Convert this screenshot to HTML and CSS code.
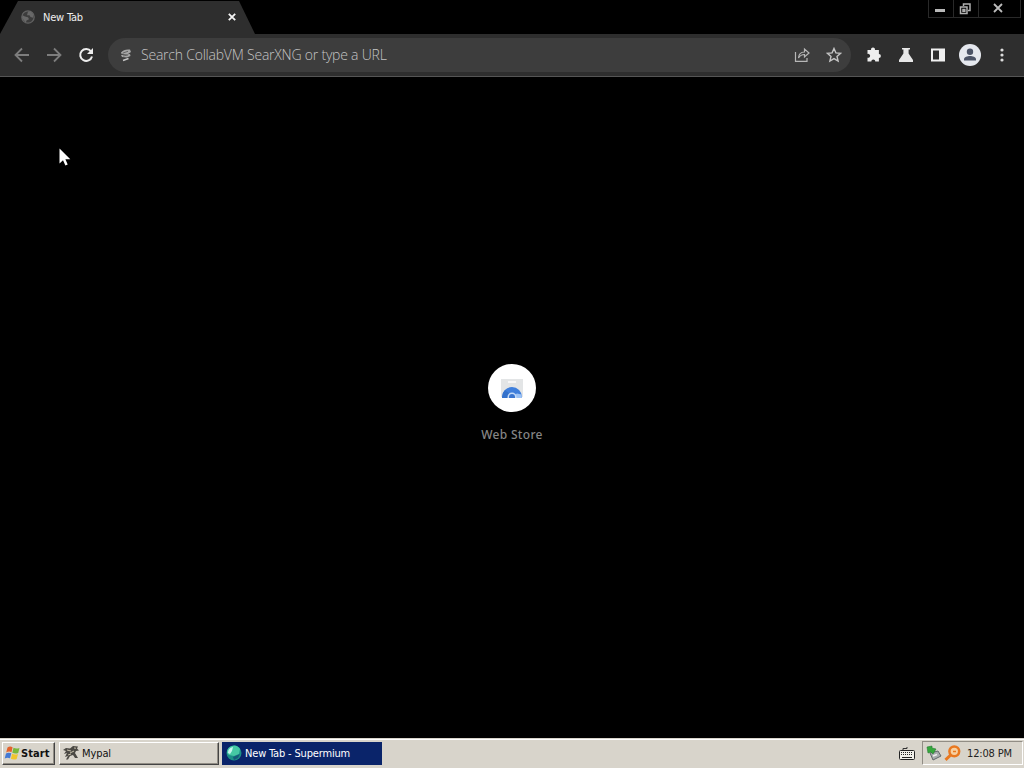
FILE: index.html
```
<!DOCTYPE html>
<html lang="en">
<head>
  <meta charset="utf-8">
  <title>New Tab</title>
  <link rel="stylesheet" href="styles.css">
</head>
<body>
  <!-- Tabs and window buttons -->
  <header class="tab-strip">
    <div class="tab">
      <svg class="globe" width="14" height="14" viewBox="0 0 14 14">
        <circle cx="7" cy="7" r="6.2" fill="#3c3c3c" stroke="#626262" stroke-width="1.3"/>
        <path d="M1.5 5.2L4 6.6l3 .6 1 2-2.5 1.3-.6 2.2L1 8zM7 1.5h3l2.4 3-.3 3.2-2.6-.7-1-1.8H6z" fill="#686868"/>
      </svg>
      <span class="tab-title">New Tab</span>
      <svg class="tab-close" width="8" height="8" viewBox="0 0 8 8"><path d="M.8.8l6.4 6.4M7.2.8L.8 7.2" stroke="#f4f4f4" stroke-width="1.8"/></svg>
    </div>
    <div class="window-buttons">
      <button><svg width="12" height="12"><path d="M1 7.5h10" stroke="#b8b8b8" stroke-width="3"/></svg></button>
      <button><svg width="12" height="12"><path d="M4.500 3V1H11v6.500H9M1.500 4H8v6.500H1.500zM4 6.500h1.800v1.800H4z" fill="none" stroke="#b0b0b0" stroke-width="1.5"/></svg></button>
      <button class="wide"><svg width="10" height="10"><path d="M1 1l8 8M9 1L1 9" stroke="#bcbcbc" stroke-width="1.800"/></svg></button>
    </div>
  </header>

  <!-- Toolbar -->
  <nav class="toolbar">
    <svg class="back" width="16" height="16" viewBox="0 0 16 16"><path d="M15 8H2M8 1.5L1.5 8 8 14.5" fill="none" stroke="#7d7d7d" stroke-width="1.8"/></svg>
    <svg class="forward" width="16" height="16" viewBox="0 0 16 16"><path d="M1 8h13M8 1.5L14.5 8 8 14.5" fill="none" stroke="#7d7d7d" stroke-width="1.8"/></svg>
    <svg class="reload" width="16" height="16" viewBox="0 0 16 16"><path d="M13 4.3A6 6 0 1 0 14 9.5" fill="none" stroke="#ededed" stroke-width="2"/><path d="M15 1v6H9z" fill="#ededed"/></svg>
    <div class="omnibox">
      <svg class="engine" width="12" height="14" viewBox="0 0 12 14">
        <path d="M1 4.500C3 2 6 1 10 1.500L11 4 8 6H4l-3-.5zM1 7l9-1 .500 2L7 9.500 2 9z" fill="#a5a5a5"/>
        <path d="M3 5l5-1.700M3 8l5-1" stroke="#555" stroke-width=".8"/>
        <path d="M3 12.500L8.500 10.500" stroke="#c8c8c8" stroke-width="1.500"/>
      </svg>
      <span class="placeholder">Search CollabVM SearXNG or type a URL</span>
      <svg class="share" width="16" height="16" viewBox="0 0 16 16">
        <path d="M1.5 5v9.3H13V11M4.5 11c.3-4 2.5-6 6-6V2L15 6l-4.5 4V7.5C8 7.5 6 8.500 4.500 11z" fill="none" stroke="#b7b7b7" stroke-width="1.2"/>
      </svg>
      <svg class="star" width="16" height="16" viewBox="0 0 16 16"><path d="M8 1.500l1.900 4.400 4.700.4-3.600 3.100 1.100 4.700L8 11.600l-4.100 2.500L5 9.400 1.400 6.300l4.700-.4z" fill="none" stroke="#c5c5c5" stroke-width="1.400"/></svg>
    </div>
    <div class="actions">
      <svg width="16" height="16" viewBox="0 0 16 16"><path d="M1.500 3h3.600a2 2 0 1 1 3.800 0h4v4a2 2 0 1 1 0 4v3.500H9.300a2 2 0 1 0-4 0H1.500v-3.800a2 2 0 1 0 0-3.800z" fill="#eee"/></svg>
      <svg width="16" height="16" viewBox="0 0 16 16"><path d="M4 1h8v1.500h-1.400v4L15 13v2H1v-2l4.400-6.500v-4H4z" fill="#e8e8e8"/></svg>
      <svg width="16" height="16" viewBox="0 0 16 16"><path d="M1 1.500h14v13H1zM3 3.500v9h6v-9z" fill="#f0f0f0" fill-rule="evenodd"/></svg>
      <svg class="avatar" width="22" height="22" viewBox="0 0 22 22"><circle cx="11" cy="11" r="11" fill="#e5e8ee"/><circle cx="11" cy="7.800" r="3.200" fill="#4b5366"/><path d="M5 16.500v-1.300c0-2.300 3.500-3.200 6-3.200s6 .9 6 3.200v1.300z" fill="#4b5366"/></svg>
      <svg class="more" width="4" height="16" viewBox="0 0 4 16" fill="#ddd"><circle cx="2" cy="3" r="1.600"/><circle cx="2" cy="8" r="1.600"/><circle cx="2" cy="13" r="1.600"/></svg>
    </div>
  </nav>

  <!-- New tab page -->
  <main class="page">
    <a class="shortcut">
      <span class="shortcut-icon">
        <svg width="24" height="24" viewBox="0 0 24 24">
          <path d="M1 3h22v18H1z" fill="#e3e5e6"/>
          <path d="M8 5h8v2H8z" fill="#f7f7f7"/>
          <path d="M2 22v-1a10 10 0 0 1 20 0v1z" fill="#3f7fdc"/>
          <path d="M2 22v-1a10 10 0 0 1 3-7l5 4-2 4z" fill="#3472cc"/>
          <path d="M15 18.500l2-1 4.500 1 .500 3.500h-6z" fill="#9dc3f5"/>
          <path d="M7.500 22v-1a4.500 4.500 0 0 1 9 0v1z" fill="#c4dbf8"/>
          <path d="M9 22v-1a3 3 0 0 1 6 0v1z" fill="#3975d0"/>
        </svg>
      </span>
      <span class="shortcut-label">Web Store</span>
    </a>
    <svg class="cursor" width="12" height="19" viewBox="0 0 12 19"><path d="M.5.500v15l3.500-3.300 2.400 5.300 2.300-1-2.300-5.200h4.900z" fill="#fff"/></svg>
  </main>

  <!-- Taskbar -->
  <footer class="taskbar">
    <button class="task start">
      <svg width="17" height="16" viewBox="0 0 17 16">
        <path d="M3.500 2.500Q6 .6 8.600 2.300L7.500 7.200Q5 5.800 2.200 7.400z" fill="#e3622c"/>
        <path d="M9.500 2.800q2.800 1.500 6 .1l-1.300 5q-3 1.300-5.900-.2z" fill="#79b83a"/>
        <path d="M2 8.500q2.600-1.600 5.300-.2L6 13.300Q3.500 12 .7 13.500z" fill="#4379d4"/>
        <path d="M8.100 8.700q2.900 1.500 5.900.2l-1.300 5q-3 1.300-5.800-.2z" fill="#f1c52e"/>
      </svg>
      <span>Start</span>
    </button>
    <button class="task mypal">
      <svg width="16" height="16" viewBox="0 0 16 16">
        <path d="M0 5l3-2 4 .5L10 1l5 .5-1 2 2 2-3 .5-1 2 3 5h-3l-2-3-3 1-2 3.500H3L5 11 2 12l2-4-3 1 2-3z" fill="#4b4944"/>
        <path d="M4 5l4 1M7 8l4-2M5 10l3-1M11 3l2 .2" stroke="#c6c0ab" stroke-width="1"/>
      </svg>
      <span>Mypal</span>
    </button>
    <button class="task active">
      <svg width="16" height="16" viewBox="0 0 16 16">
        <circle cx="8" cy="8" r="7.500" fill="#1b8f86"/>
        <path d="M1 8a7 7 0 0 1 13-4l-1 5-5 2-5-1z" fill="#45c9a4"/>
        <path d="M2 8q0-5 5-6L6 6 4 9z" fill="#c7f5ee"/>
        <path d="M7 12l7-3-2 4-4 2z" fill="#155b79"/>
      </svg>
      <span>New Tab - Supermium</span>
    </button>
    <svg class="keyboard" width="16" height="15" viewBox="0 0 16 15">
      <path d="M4 4V2.500h4V1" fill="none" stroke="#333"/>
      <rect x=".5" y="4.500" width="15" height="9" rx="1" fill="#f1f0ea" stroke="#222"/>
      <path d="M2 6.500h12M2 8.500h12" stroke="#222" stroke-dasharray="1 1"/><path d="M3 11.500h10" stroke="#222"/>
    </svg>
    <div class="tray">
      <svg width="16" height="16" viewBox="0 0 16 16">
        <path d="M4 8l8-2 3 5-8 4z" fill="#a8acad" stroke="#60686b"/>
        <path d="M7 11l4-1.500" stroke="#eee" stroke-width="1.500"/>
        <path d="M1 2l5-1v2l4 1-3 5-2-2-3 1z" fill="#36a83c" stroke="#267b32" stroke-width=".6"/>
      </svg>
      <svg width="17" height="16" viewBox="0 0 17 16">
        <circle cx="10.300" cy="6.300" r="4.900" fill="#f7cfa0" stroke="#e97820" stroke-width="2.500"/>
        <path d="M7.200 9.500L1.500 14.800" stroke="#e97820" stroke-width="3"/><path d="M9 6.500h3" stroke="#e97820" stroke-width="1.500"/>
      </svg>
      <span class="clock">12:08 PM</span>
    </div>
  </footer>
</body>
</html>
```
FILE: styles.css
```
* {
  box-sizing: border-box;
}

body {
  margin: 0;
  height: 768px;
  display: flex;
  flex-direction: column;
  overflow: hidden;
  background: #000;
  font-family: "DejaVu Sans Condensed", "DejaVu Sans", sans-serif;
  font-stretch: condensed;
  font-size: 11px;
}

svg {
  display: block;
  flex: none;
}

button {
  font: inherit;
  padding: 0;
  border: 0;
  background: none;
}

span {
  white-space: nowrap;
}

/* tabs */
.tab-strip {
  height: 34px;
  display: flex;
  justify-content: space-between;
}

.tab {
  width: 256px;
  height: 34px;
  padding: 0 20px 0 21px;
  display: flex;
  align-items: center;
  background: #2e2e2e;
  clip-path: polygon(18px 1px, 239px 1px, 255px 34px, 0 34px);
}

.tab-title {
  margin-left: 8px;
  color: #eee;
  letter-spacing: -0.2px;
}

.tab-close {
  margin-left: auto;
}

.window-buttons {
  display: flex;
  height: 18px;
  margin-right: 3px;
  border: 1px solid #292929;
  border-top: 0;
}

.window-buttons button {
  width: 25px;
  display: flex;
  justify-content: center;
  padding: 3px 2px 0 0;
  border-right: 1px solid #292929;
}

.window-buttons .wide {
  width: 41px;
  padding-right: 3px;
  border-right: 0;
}

/* toolbar */
.toolbar {
  height: 43px;
  display: flex;
  align-items: center;
  padding-left: 14px;
  background: #2e2e2e;
  border-bottom: 1px solid #555;
}

.forward,
.reload {
  margin-left: 16px;
}

.omnibox {
  width: 743px;
  height: 34px;
  margin-left: 14px;
  padding: 0 9px 0 12px;
  display: flex;
  align-items: center;
  border-radius: 17px;
  background: #3d3d3d;
}

.placeholder {
  margin-left: 9px;
  padding-bottom: 2px;
  color: #c4c4c4;
  font: 300 14px "Open Sans", "Noto Sans", sans-serif;
  letter-spacing: -0.22px;
}

.share {
  margin-left: auto;
}

.star {
  margin-left: 16px;
}

.actions {
  display: flex;
  align-items: center;
  gap: 16px;
  margin-left: 15px;
}

.avatar {
  margin: 0 -3px;
}

.more {
  margin-left: 6px;
}

/* page */
.page {
  position: relative;
  flex: 1;
  display: flex;
  justify-content: center;
  padding-top: 287px;
}

.shortcut {
  display: flex;
  flex-direction: column;
  align-items: center;
}

.shortcut-icon {
  width: 48px;
  height: 48px;
  display: grid;
  place-items: center;
  border-radius: 50%;
  background: #fff;
}

.shortcut-label {
  margin-top: 14px;
  color: #858585;
  font: 500 12px/17px "Noto Sans", sans-serif;
  letter-spacing: 0.3px;
}

.cursor {
  position: absolute;
  left: 59px;
  top: 71px;
}

/* taskbar */
.taskbar {
  height: 30px;
  display: flex;
  align-items: center;
  padding-bottom: 1px;
  background: #d8d4cb;
  border-top: 1px solid #d8d4cb;
  box-shadow: inset 0 1px #fff;
}

.task {
  height: 23px;
  display: flex;
  align-items: center;
  gap: 3px;
  padding-left: 3px;
  color: #111;
  border: 1px solid;
  border-color: #fff #444 #444 #fff;
  box-shadow: inset -1px -1px #918d85;
}

.start {
  width: 53px;
  margin-left: 2px;
  padding-left: 1px;
  gap: 0;
  font-weight: bold;
  letter-spacing: 0.1px;
}

.mypal {
  width: 160px;
  margin-left: 4px;
  letter-spacing: -0.1px;
}

.active {
  width: 160px;
  margin-left: 3px;
  color: #fff;
  background: #0a246a;
  border-color: #0a246a;
  box-shadow: none;
  letter-spacing: -0.17px;
}

.keyboard {
  margin-left: auto;
}

.tray {
  width: 101px;
  height: 24px;
  margin: 0 1px 0 7px;
  padding-left: 3px;
  display: flex;
  align-items: center;
  gap: 2px;
  border: 1px solid;
  border-color: #918d85 #fff #fff #918d85;
}

.clock {
  margin-left: 4px;
  color: #222;
  letter-spacing: -0.15px;
}
```
